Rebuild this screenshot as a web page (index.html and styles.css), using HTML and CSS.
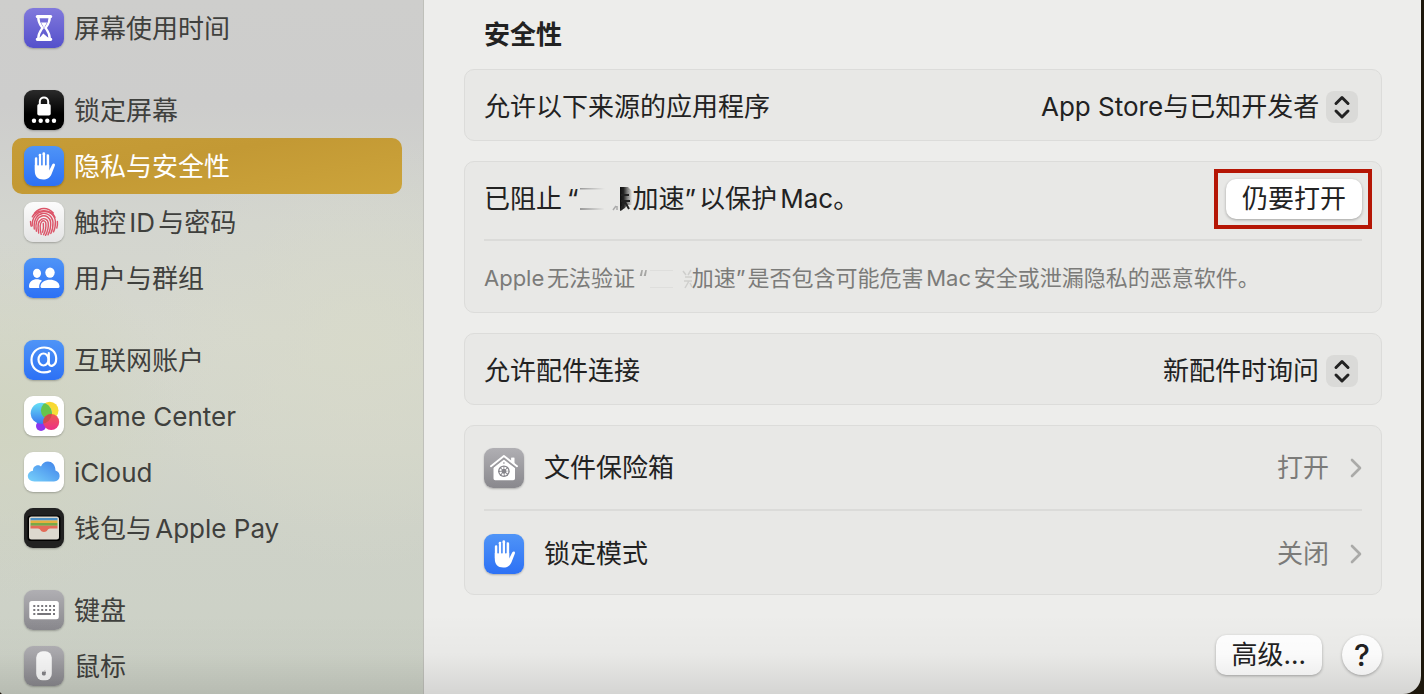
FILE: index.html
```html
<!DOCTYPE html>
<html lang="zh-CN">
<head>
<meta charset="utf-8">
<title>隐私与安全性</title>
<link rel="stylesheet" href="styles.css">
</head>
<body>
<svg class="defs" width="0" height="0" aria-hidden="true">
  <defs>
    <symbol id="hand" viewBox="0 0 40 40">
      <g stroke="#fff" stroke-width="2.7" stroke-linecap="round"><path d="M12.2 12.5V24M16 9V22M19.8 7.5V22M23.8 9.5V24"/></g>
      <path fill="#fff" d="M10.8 19H25.2V24.6L28.2 18.6C29.1 16.9 31.5 17.4 30.9 19.5L27.6 28C25.8 32 23.2 33.5 19.2 33.5C13.8 33.5 10.8 30.2 10.8 25Z"/>
      <path stroke="#4287f6" stroke-width="1.1" d="M14.1 10V19.500M17.9 9V19.500M21.8 9V19.500"/>
    </symbol>
    <symbol id="updown" viewBox="0 0 32 32">
      <path d="M10 12.5 16 6.5 22 12.5M10 20 16 26 22 20" fill="none" stroke="#222" stroke-width="3" stroke-linecap="round" stroke-linejoin="round"/>
    </symbol>
    <symbol id="chevron" viewBox="0 0 12 20">
      <path d="M2 2 10 10 2 18" fill="none" stroke="#aaaaa8" stroke-width="2.6" stroke-linecap="round" stroke-linejoin="round"/>
    </symbol>
  </defs>
</svg>
<div class="window">
  <nav class="sidebar" aria-label="设置">
    <div class="group">
      <a class="item" href="#screentime"><span class="icon purple"><svg viewBox="0 0 40 40"><path d="M13.300 8.500H26.700M13.300 31.300H26.700" stroke="#fff" stroke-width="3.200" stroke-linecap="round"/><path d="M14.200 9C14.200 15 16.500 17 18.500 20C16.500 23 14.200 25 14.200 31H25.800C25.800 25 23.500 23 21.500 20C23.500 17 25.800 15 25.800 9Z" fill="none" stroke="#fff" stroke-width="2.300"/><path fill="#fff" d="M17 14.500H23L20 20ZM19.300 19V25.500L24.500 30H15.500L19.300 25.500Z"/></svg></span>屏幕使用时间</a>
    </div>
    <div class="group">
      <a class="item" href="#lock"><span class="icon black"><svg viewBox="0 0 40 40"><rect x="13.3" y="14" width="13.4" height="11.5" rx="1.8" fill="#fff"/><path d="M15.8 15V11.5C15.8 6 24.2 6 24.2 11.5V15" fill="none" stroke="#fff" stroke-width="2"/><g fill="#fff"><circle cx="10" cy="30.8" r="2.2"/><circle cx="16.7" cy="30.8" r="2.2"/><circle cx="23.3" cy="30.8" r="2.2"/><circle cx="30" cy="30.8" r="2.2"/></g></svg></span>锁定屏幕</a>
      <a class="item selected" href="#privacy" aria-current="page"><span class="icon blue"><svg><use href="#hand"/></svg></span>隐私与安全性</a>
      <a class="item" href="#touchid"><span class="icon white soft"><svg viewBox="0 0 40 40"><g fill="none" stroke="#dc5468" stroke-width="1.4" stroke-linecap="round"><path d="M10.5 11.2C15.8 5 24 5 29.3 11"/><path d="M8.3 14.8C12.6 6.8 27.2 6.5 31 15.3"/><path d="M6.5 19.5C6.7 24.3 7.3 23.8 7.2 24.2M33.4 19.5C33.6 21.5 33.4 24 32.8 26"/><path d="M8.2 23.8C7.5 5.5 30.4 5.5 31.4 19.5C31.5 23.5 31 27 29.5 29.8"/><path d="M10.3 27C8.2 7 28 8 29 20C29.2 24.8 28.3 28.6 26.8 31.5"/><path d="M12.4 29.2C9.3 10 25.4 11 26.6 20C27 25 26 29 24 32.8"/><path d="M14.7 31C11.3 14.5 23.1 14 24.2 20.6C24.7 25.6 23.5 29.8 21.5 33.3"/><path d="M17.2 32.3C13.6 18 20.6 16.6 21.8 21C22.3 25.5 21.3 29.5 19.6 32.7"/><path d="M19.3 21.5C19.8 25.2 19.3 28 18.6 30.2"/></g></svg></span>触控ID与密码</a>
      <a class="item" href="#users"><span class="icon blue"><svg viewBox="0 0 40 40"><g fill="#fff"><ellipse cx="13" cy="15.3" rx="4" ry="4.6"/><ellipse cx="26" cy="14.6" rx="4.7" ry="5.2"/><path d="M5 28.5C5 20.5 14 20 18 22.7C15.8 24.5 14.8 27 15.3 30H6.2Q5 30 5 28.5Z"/><path d="M16.5 28.5C16.5 19.5 35.5 19.5 35.5 28.5Q35.5 30 34 30H18Q16.5 30 16.5 28.5Z"/></g></svg></span>用户与群组</a>
    </div>
    <div class="group">
      <a class="item" href="#accounts"><span class="icon blue"><svg viewBox="0 0 40 40"><path d="M24.800 13V22.500C24.800 28 32.200 26.500 32.200 18.800C32.200 11.800 27 7.500 20.200 7.500C12.800 7.500 7.500 12.800 7.500 20C7.500 27.500 12.800 32.400 20 32.400C22.500 32.400 24.500 32 26 31.200" fill="none" stroke="#fff" stroke-width="2.200" stroke-linecap="round"/><ellipse cx="19.500" cy="19.500" rx="5" ry="6" fill="none" stroke="#fff" stroke-width="2.200"/></svg></span>互联网账户</a>
      <a class="item" href="#gamecenter"><span class="icon white"><svg viewBox="0 0 40 40"><defs><linearGradient id="gb" x2="0" y2="1"><stop stop-color="#66e0f5"/><stop offset="1" stop-color="#3a78ef"/></linearGradient><linearGradient id="gy" x2="0" y2="1"><stop stop-color="#f9d72f"/><stop offset="1" stop-color="#f4e23d"/></linearGradient><linearGradient id="gr" x2="0" y2="1"><stop stop-color="#ef5a50"/><stop offset="1" stop-color="#ec2f86"/></linearGradient><clipPath id="gc"><circle cx="17.3" cy="17.3" r="10.6"/></clipPath></defs><circle cx="17" cy="30" r="5" fill="#8c35ee"/><circle cx="25.7" cy="14.5" r="8.8" fill="url(#gy)"/><circle cx="17.3" cy="17.3" r="10.6" fill="url(#gb)"/><circle cx="25.7" cy="14.5" r="8.8" fill="#66c44b" clip-path="url(#gc)"/><circle cx="27.2" cy="26" r="8" fill="url(#gr)"/><circle cx="27.2" cy="26" r="8" fill="#ce4b4d" clip-path="url(#gc)"/></svg></span>Game Center</a>
      <a class="item" href="#icloud"><span class="icon white"><svg viewBox="0 0 40 40"><defs><linearGradient id="cl" y1="1" x2="1" y2="0"><stop stop-color="#78d2fb"/><stop offset="1" stop-color="#3f80e9"/></linearGradient></defs><path fill="url(#cl)" d="M10.5 29.500C2.500 29.500 1.500 20 9 18.800C8.500 14 14 11.500 17 14.500C20 6.500 31.500 8 31.500 18.500C37.500 20 37 29.500 30 29.500Z"/></svg></span>iCloud</a>
      <a class="item" href="#wallet"><span class="icon dark"><svg viewBox="0 0 40 40"><rect x="3.500" y="7.500" width="33" height="25.500" rx="3" fill="#000"/><rect x="5" y="8.500" width="30" height="23" rx="2.500" fill="#dcd8ce"/><path fill="#4b8fc4" d="M6.500 10H33.500V12.500H6.500Z"/><path fill="#e6b13f" d="M6.500 12.500H33.500V15H6.500Z"/><path fill="#78a947" d="M6.500 15H33.500V17.800H6.500Z"/><path fill="#e36b58" d="M6.500 17.800H33.500V20.500H26C23.500 20.500 23.500 24 20 24C16.500 24 16.500 20.500 14 20.500H6.500Z"/></svg></span>钱包与Apple Pay</a>
    </div>
    <div class="group">
      <a class="item" href="#keyboard"><span class="icon gray"><svg viewBox="0 0 40 40"><rect x="5.300" y="11" width="29.500" height="18.300" rx="2.500" fill="#fff"/><path d="M9.300 16H31M9.300 20H31" stroke="#77767b" stroke-width="2" stroke-dasharray="2 1.950"/><path d="M9.300 24H11.300M13.200 24H27M29 24H31" stroke="#77767b" stroke-width="2"/></svg></span>键盘</a>
      <a class="item" href="#mouse"><span class="icon gray"><svg viewBox="0 0 40 40"><rect x="12.200" y="5.300" width="15.600" height="29" rx="6.500" fill="#f8f8f8"/><path fill="#858488" d="M20 25.800C22 24.800 22.500 26 21.700 27C22 28.500 21.300 30 20 29.300C18.500 30 17.700 28.500 17.900 27C18.100 25.500 19 25.300 20 25.800ZM20 25.200 21.200 23.800V24.500Z"/></svg></span>鼠标</a>
    </div>
  </nav>
  <main class="content">
    <h1 class="heading">安全性</h1>
    <section class="card">
      <div class="row">
        <label for="sources">允许以下来源的应用程序</label>
        <span class="popup"><select id="sources"><option>App Store与已知开发者</option></select><svg class="updown"><use href="#updown"/></svg></span>
      </div>
    </section>
    <section class="card">
      <div class="row tall">
        <p class="message">已阻止<span class="open">“</span><svg class="smudge" viewBox="0 0 54 26" aria-hidden="true"><defs><linearGradient id="sm"><stop stop-color="#111"/><stop offset=".3" stop-color="#111" stop-opacity=".9"/><stop offset="1" stop-color="#111" stop-opacity="0"/></linearGradient><linearGradient id="sl"><stop stop-color="#999"/><stop offset="1" stop-color="#999" stop-opacity="0"/></linearGradient><filter id="soft"><feGaussianBlur stdDeviation=".6"/></filter></defs><path fill="url(#sl)" d="M2 2H27V3.500H2ZM2 22H26V24H2Z"/><g filter="url(#soft)"><path d="M35 24 38 20M39 20V24" stroke="#aaa" stroke-width="1.500"/><path fill="url(#sm)" d="M42 1H50L54 5V19H49L47 22L42 25Z"/><path d="M43 9H51M43 15H52M47 15 43 24M47 16 51 23" stroke="#222" stroke-width="2"/></g></svg>加速<span class="close">”</span>以保护Mac。</p>
        <span class="marked"><button class="button" type="button">仍要打开</button></span>
      </div>
      <div class="row note">
        <p class="message">Apple无法验证<span class="open faded">“</span><svg class="smudge small" viewBox="0 0 44 22" aria-hidden="true"><path fill="#dededc" d="M2 2H25V3H2ZM2 19H25V20H2Z"/><path d="M35 3 38 7M43 2 40 7M37 9H44M36 13H44M41 13 37 20M42 15 44 19" stroke="#cfcfcd" stroke-width="1.500"/></svg>加速<span class="close">”</span>是否包含可能危害Mac安全或泄漏隐私的恶意软件。</p>
      </div>
    </section>
    <section class="card">
      <div class="row">
        <label for="accessories">允许配件连接</label>
        <span class="popup"><select id="accessories"><option>新配件时询问</option></select><svg class="updown"><use href="#updown"/></svg></span>
      </div>
    </section>
    <section class="card">
      <a class="row link" href="#filevault"><span class="icon gray"><svg viewBox="0 0 40 40"><path fill="#fff" d="M9.500 19.500 19.800 11 31 19.500V30.500Q31 32.300 29.200 32.300H11.300Q9.500 32.300 9.500 30.500ZM27.300 9.700H30.300V16L27.300 13.500Z"/><path d="M8 19.200 19.900 10 32 19.200" fill="none" stroke="#9b9a9e" stroke-width="2.500"/><path d="M7 18.200 19.900 8 33 18.200" fill="none" stroke="#fff" stroke-width="2" stroke-linecap="round" stroke-linejoin="round"/><path fill="#fff" d="M27.300 9.700H30.300V16L27.300 13.500Z"/><circle cx="19.900" cy="23.200" r="5.800" fill="#85848a"/><circle cx="19.900" cy="23.200" r="3.500" fill="none" stroke="#fff" stroke-width="2" stroke-dasharray="1.900 .850"/><circle cx="19.900" cy="15" r=".8" fill="#85848a"/></svg></span><span class="name">文件保险箱</span><span class="value">打开</span><svg class="chevron"><use href="#chevron"/></svg></a>
      <a class="row link" href="#lockdown"><span class="icon blue"><svg><use href="#hand"/></svg></span><span class="name">锁定模式</span><span class="value">关闭</span><svg class="chevron"><use href="#chevron"/></svg></a>
    </section>
    <div class="actions">
      <button class="button more" type="button">高级...</button>
      <button class="button help" type="button" aria-label="帮助">?</button>
    </div>
  </main>
</div>
</body>
</html>
```
FILE: styles.css
```css
* { box-sizing: border-box; }
body {
  margin: 0;
  background: #1d170c;
  color: #222;
  font: 26px/36px Inter, "Noto Sans CJK SC", sans-serif;
  text-autospace: normal;
}
p, h1 { margin: 0; }
a { color: inherit; text-decoration: none; }
button, select { font: inherit; color: inherit; text-autospace: inherit; }
.defs { position: absolute; }

.window {
  position: relative;
  display: flex;
  height: 100vh;
  margin-right: 3px;
  overflow: hidden;
  background: #ededeb;
  border-radius: 0 0 18px 4px;
}
.window::after {
  content: "";
  position: absolute;
  inset: auto 0 0;
  height: 80px;
  background: linear-gradient(transparent, rgba(0, 0, 0, .02) 50%, rgba(0, 0, 0, .1));
  pointer-events: none;
}

.sidebar {
  flex: none;
  display: flex;
  flex-direction: column;
  gap: 26px;
  width: 424px;
  padding: 0 21px 0 12px;
  border-right: 1px solid #bfc0ba;
  background:
    radial-gradient(circle at 85% 350px, rgba(216, 218, 202, .8), transparent 220px),
    radial-gradient(circle at 0 420px, rgba(208, 212, 192, .9), transparent 180px),
    linear-gradient(#cececc, #cdcdcc 15%, #d3d5cf 32%, #d6d8ce 48%, #d2d5ca 65%, #ced2c8 76%, #ccd1c6);
  color: #3f403d;
}
.item {
  display: flex;
  align-items: center;
  gap: 10px;
  height: 56px;
  padding: 2px 12px 0;
  border-radius: 10px;
}
.item .icon { margin-bottom: 2px; }
.selected {
  background: linear-gradient(170deg, #c69c37, #c39934 40%, #cca43b);
  color: #fff;
}

.icon {
  flex: none;
  width: 40px;
  height: 40px;
  border-radius: 9px;
  box-shadow: 0 1px 2px rgba(0, 0, 0, .25);
}
.icon svg { display: block; width: 40px; height: 40px; }
.purple { background: linear-gradient(#8179dc, #5450cb); }
.black { background: linear-gradient(#2b2b2b, #000 60%); }
.blue { background: linear-gradient(#4f94f7, #2d71f5); }
.white { background: #fff; }
.soft { background: linear-gradient(#fcfcfc, #e4e4e4); }
.dark { background: #212121; }
.gray { background: linear-gradient(#b0afb3, #89888d); }

.content {
  flex: 1;
  min-width: 0;
  padding: 17px 39px 0 40px;
}
.heading {
  padding: 0 20px;
  margin-bottom: 16px;
  font-size: 26px;
  line-height: 36px;
  font-weight: 700;
}
.card {
  margin-bottom: 20px;
  padding: 0 19px;
  border: 1px solid #dcdcda;
  border-radius: 10px;
  background: #e8e8e6;
}
.row {
  display: flex;
  align-items: center;
  justify-content: space-between;
  height: 70px;
  padding-top: 3px;
}
.row + .row { border-top: 2px solid #dbdbd9; }
.tall {
  height: 77px;
  padding: 0 0 3px;
}
.note {
  height: 73px;
  color: #7b7b79;
  font-size: 22px;
}
.message { white-space: nowrap; }
.open { margin-left: 5px; }
.close { margin-right: 3px; }
.faded { opacity: .6; }
.smudge {
  width: 54px;
  height: 26px;
  vertical-align: -4px;
}
.small { width: 44px; height: 22px; }
.note .open { margin-left: 3px; }
.note .close { margin-right: 2px; }

.popup {
  position: relative;
  display: flex;
  margin-right: 4px;
}
.popup select {
  height: 36px;
  padding: 0 38px 0 0;
  border: 0;
  background: none;
  appearance: none;
}
.updown {
  position: absolute;
  right: 0;
  top: 2px;
  width: 32px;
  height: 32px;
  border-radius: 8px;
  background: #dadad8;
  pointer-events: none;
}

.marked { position: relative; display: flex; }
.marked::after {
  content: "";
  position: absolute;
  inset: -10px -10px -10px -12px;
  border: 4px solid #b51605;
  pointer-events: none;
}
.button {
  height: 40px;
  padding: 0 16px;
  border: 0;
  border-radius: 10px;
  background: #fff;
  box-shadow: 0 1px 3px rgba(0, 0, 0, .3);
}

.link { height: 83px; padding: 0; }
.link + .link { height: 85px; padding-top: 2px; }
.name { flex: 1; padding-left: 20px; }
.value { color: #7b7b79; }
.chevron { width: 12px; height: 20px; margin-left: 21px; }

.actions {
  display: flex;
  justify-content: flex-end;
  gap: 20px;
  margin-top: 40px;
}
.more { text-autospace: no-autospace; }
.help {
  width: 40px;
  padding: 0;
  border-radius: 50%;
  font-size: 30px;
  font-weight: 500;
}
```
